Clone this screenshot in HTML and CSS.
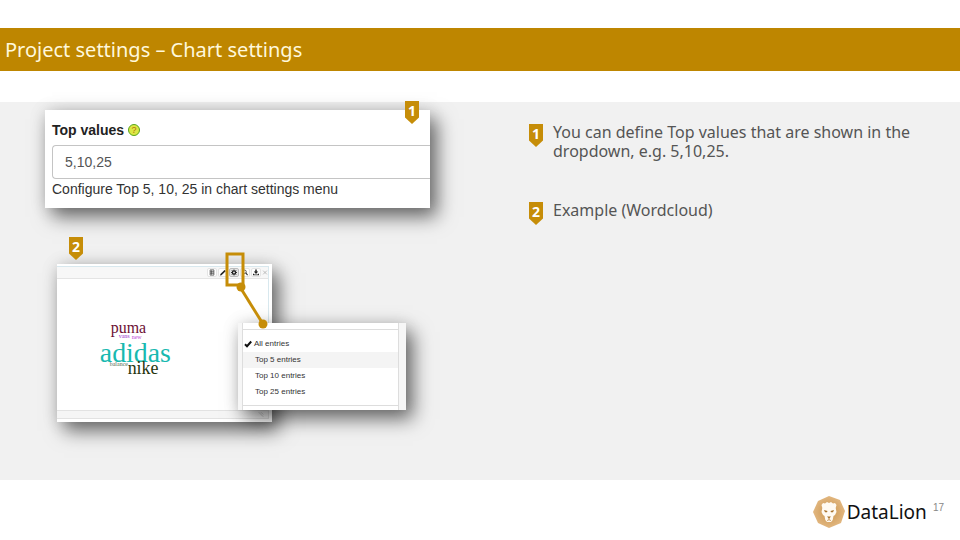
FILE: index.html
```html
<!DOCTYPE html>
<html lang="en">
<head>
<meta charset="utf-8">
<title>Project settings – Chart settings</title>
<link rel="stylesheet" href="styles.css">
</head>
<body>
<header class="title-bar"><h1>Project settings – Chart settings</h1></header>
<main class="content">
  <div class="figures">
    <section class="card settings">
      <span class="marker on-settings">1</span>
      <div class="field-head">
        <label for="top-values">Top values</label>
        <button class="help" type="button" aria-label="Help">?</button>
      </div>
      <input id="top-values" type="text" value="5,10,25">
      <p>Configure Top 5, 10, 25 in chart settings menu</p>
    </section>
    <section class="card chart">
      <span class="marker on-chart">2</span>
      <div class="toolbar">
        <button type="button" aria-label="Table"><svg viewBox="0 0 8 8"><path d="M1.500 .5h5v7h-5zM1.500 3h5M1.500 5h5M3.500 1v6" fill="none" stroke="#444"/></svg></button>
        <button type="button" aria-label="Edit"><svg viewBox="0 0 8 8"><path d="M0 8l.6-2L6 .5 7.800 2 2 7.500z" fill="#222"/></svg></button>
        <button type="button" class="active" aria-label="Settings"><svg viewBox="0 0 8 8"><circle cx="4" cy="4" r="2.200" fill="none" stroke="#222" stroke-width="1.800"/><path d="M4 0v2M4 6v2M0 4h2M6 4h2M1.200 1.200l1.500 1.500M6.800 1.200L5.300 2.700M1.200 6.800l1.500-1.500M6.800 6.800L5.300 5.300" stroke="#222" stroke-width="1.200"/></svg></button>
        <button type="button" aria-label="Search"><svg viewBox="0 0 8 8"><circle cx="3.500" cy="3" r="2.200" fill="none" stroke="#333"/><path d="M5 4.500L7.500 7.500" stroke="#333" stroke-width="1.600"/></svg></button>
        <button type="button" aria-label="Download"><svg viewBox="0 0 8 8"><path d="M3 0h2v2.800h2L4 6 1 2.800h2zM0 5.500v2.300h8V5.500H6.500v1h-5v-1z" fill="#222"/></svg></button>
        <button type="button" class="close" aria-label="Close"><svg viewBox="0 0 8 8"><path d="M1.500 1.500l5 5M6.500 1.500l-5 5" stroke="#aaa"/></svg></button>
      </div>
      <svg class="cloud" viewBox="0 0 212 132" role="img" aria-label="Word cloud">
        <text x="54" y="54" font-size="16" fill="#6d1034">puma</text>
        <text x="62" y="59" font-size="6" fill="#9b35cf">vans</text>
        <text x="75" y="60" font-size="6" fill="#bd45d5">new</text>
        <text x="43" y="83" font-size="28" fill="#18b9b0">adidas</text>
        <text x="53" y="87" font-size="6" fill="#4f6a50">balance</text>
        <text x="71" y="95" font-size="18" fill="#26350e">nike</text>
      </svg>
      <div class="chart-foot"><svg viewBox="0 0 8 8"><path d="M1 1l6 6M4 1l3 3" stroke="#bbb"/></svg></div>
      <div class="card menu">
        <ul>
          <li><button type="button"><svg viewBox="0 0 8 8"><path d="M1 4.200l2 2L7.200 1.500" fill="none" stroke="#111" stroke-width="2"/></svg>All entries</button></li>
          <li class="hovered"><button type="button">Top 5 entries</button></li>
          <li><button type="button">Top 10 entries</button></li>
          <li><button type="button">Top 25 entries</button></li>
        </ul>
      </div>
      <svg class="callout" viewBox="0 0 46 80" aria-hidden="true">
        <rect x="3" y="3" width="16" height="31" fill="none" stroke="#c68d08" stroke-width="3"/>
        <path d="M16 36L39 73" stroke="#c68d08" stroke-width="3"/>
        <circle cx="17" cy="36" r="4.500" fill="#c68d08"/><circle cx="39" cy="73" r="4.500" fill="#c68d08"/>
      </svg>
    </section>
  </div>
  <ol class="notes">
    <li><span class="marker">1</span><p>You can define Top values that are shown in the dropdown, e.g. 5,10,25.</p></li>
    <li><span class="marker">2</span><p>Example (Wordcloud)</p></li>
  </ol>
</main>
<footer>
  <svg class="logo" viewBox="0 0 32 32" aria-hidden="true">
    <defs><radialGradient id="gold"><stop offset="0" stop-color="#c9944e"/><stop offset="1" stop-color="#e2b780"/></radialGradient></defs>
    <path d="M16 0L27 4 32 15 28 27 16 32 5 27 0 16 5 5z" fill="url(#gold)"/>
    <path d="M8.500 9l1.500-2 2 .5 2-1.500 2 1 2-1 2 1.500 2-.5L23.500 9l-.8 3 .8 4-1.500 3-1.500 1-.8 4-1.700 2h-4l-1.700-2-.8-4L10 19l-1.500-3 .8-4z" fill="#fffaf2"/>
    <path d="M11 14l3.500 1-.5 1.200h-2zM21 14l-3.500 1 .5 1.200h2zM14 20.500h4l-2 2.200z" fill="#a8742f"/>
    <path d="M16 22v2M14 24.500l2-.7 2 .7" fill="none" stroke="#c08c47" stroke-width=".8"/>
  </svg>
  <span class="brand">DataLion</span>
  <span class="page">17</span>
</footer>
</body>
</html>
```
FILE: styles.css
```css
* { box-sizing: border-box; }
body {
  margin: 0;
  padding-top: 28px;
  background: #fff;
  color: #555;
  font-family: "Noto Sans", sans-serif;
}
button { padding: 0; border: 0; background: none; color: inherit; font: inherit; }
svg { display: block; }
.title-bar { padding: 8px 5px; background: #be8600; color: #fff8dc; }
h1 { margin: 0; font: 400 20px/27px "Noto Sans", sans-serif; }
.content {
  display: grid;
  grid-template-columns: 55fr 45fr;
  margin-top: 31px;
  padding-bottom: 58px;
  background: #f1f1f1;
}
.figures { padding: 8px 0 0 45px; }
.card { position: relative; background: #fff; box-shadow: 7px 9px 18px rgba(0, 0, 0, .55), 0 0 16px rgba(0, 0, 0, .12); }
.marker {
  flex: none;
  width: 14px;
  height: 23px;
  background: #c68d08;
  clip-path: polygon(0 0, 100% 0, 100% 72%, 50% 100%, 0 72%);
  color: #fff;
  font: 700 14px/19px "Noto Sans", sans-serif;
  text-align: center;
}
.settings {
  width: 385px;
  padding: 11px 0 10px 7px;
  color: #333;
  font: 14px/18px "Liberation Sans", sans-serif;
}
.field-head { display: flex; align-items: center; gap: 4px; height: 18px; }
.field-head label { font-weight: 700; color: #222; }
.help { width: 12px; height: 12px; border: 1px solid #55a51c; border-radius: 50%; background: #dce743; color: #b16f0a; font-size: 9px; line-height: 10px; }
.settings input {
  display: block;
  width: 100%;
  height: 34px;
  margin: 6px 0 1px;
  padding: 0 12px;
  border: 1px solid #c4c4c4;
  border-right: 0;
  border-radius: 4px 0 0 4px;
  background: #fff;
  color: #555;
  font: inherit;
}
.settings p { margin: 0; }
.on-settings, .on-chart { position: absolute; }
.on-settings { top: -9px; right: 11px; }
.chart { width: 215px; margin: 56px 0 0 12px; padding: 2px 3px 3px 0; }
.on-chart { top: -27px; left: 12px; }
.toolbar { display: flex; justify-content: flex-end; gap: 1px; padding: 1px 0; border: 1px solid #d8e8ee; border-left: 0; border-bottom-color: #e4e4e4; background: #f7f7f7; }
.toolbar button { padding: 0 1px; border: 1px solid #e4e4e4; border-radius: 2px; background: #fff; }
.toolbar .active { background: #e5e5e5; border-color: #bbb; }
.toolbar .close { padding: 0; border-width: 1px 0; border-color: transparent; background: none; }
.toolbar svg { width: 6px; height: 7px; }
.cloud { width: 100%; border-right: 1px solid #d8e8ee; font-family: "Liberation Serif", serif; }
.chart-foot { display: flex; justify-content: flex-end; padding: 0 4px; border: 1px solid #e2e2e2; border-left: 0; background: #f5f5f5; }
.chart-foot svg { width: 6px; height: 7px; }
.menu { position: absolute; top: 59px; left: 181px; width: 168px; padding: 0 7px 0 4px; background: #f6f6f6; }
.menu ul {
  margin: 0;
  padding: 6px 0 5px;
  border: 1px solid #ddd;
  border-width: 0 1px;
  background: linear-gradient(#ddd, #ddd) 0 6px / 100% 1px no-repeat, linear-gradient(#ddd, #ddd) 0 82px / 100% 1px no-repeat, #fff;
  list-style: none;
  font: 8px/16px "Liberation Sans", sans-serif;
  color: #333;
}
.menu li { padding-left: 12px; }
.menu li:first-child { padding: 7px 0 0 1px; }
.menu li:last-child { padding-bottom: 5px; }
.menu button { display: flex; align-items: center; gap: 2px; }
.menu svg { width: 8px; height: 8px; }
.hovered { background: #f4f4f4; }
.callout { position: absolute; top: -13px; left: 167px; width: 46px; height: 80px; }
.notes { margin: 0; padding: 21px 44px 0 1px; list-style: none; }
.notes li { display: flex; gap: 10px; margin-bottom: 40px; }
.notes .marker { margin-top: 1px; }
.notes p { margin: 0; font: 16px/19px "Noto Sans", sans-serif; }
footer { display: flex; align-items: center; padding: 16px 16px 0; }
.logo { width: 32px; height: 32px; margin-left: auto; }
.brand { margin-left: 2px; color: #111; font: 19px/28px "Noto Sans", sans-serif; }
.page { margin: 0 0 8px 6px; color: #888; font: 10px/16px "Liberation Sans", sans-serif; }
```
